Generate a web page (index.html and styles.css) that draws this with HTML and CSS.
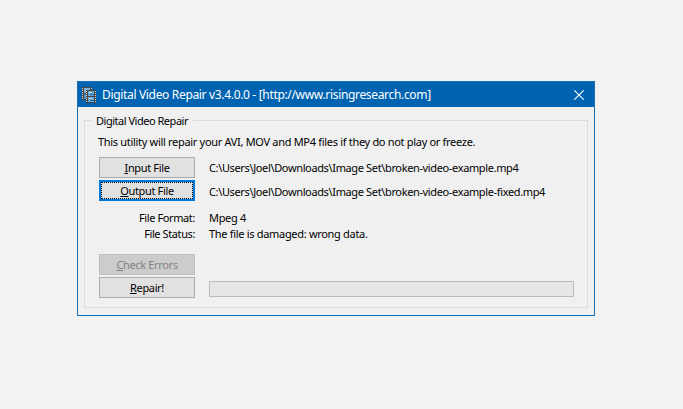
FILE: index.html
```html
<!DOCTYPE html>
<html lang="en">
<head>
    <meta charset="UTF-8">
    <meta name="viewport" content="width=device-width, initial-scale=1.0">
    <title>Digital Video Repair</title>
    <link rel="stylesheet" href="styles.css">
</head>
<body>
    <div class="window">
        <div class="titlebar">
            <svg class="app-icon" width="14" height="16" viewBox="0 0 14 16" shape-rendering="crispEdges">
                <rect x="0" y="0" width="10" height="13" fill="#4a4542"/>
                <rect x="2" y="1" width="6" height="5" fill="#7fb5dc"/>
                <rect x="2" y="7" width="6" height="5" fill="#4f91c5"/>
                <path d="M.5 1v12M9.500 1v2" stroke="#d9d5cf" stroke-dasharray="1 1"/>
                <rect x="4" y="3" width="10" height="13" fill="#4a4542"/>
                <rect x="6" y="4" width="6" height="5" fill="#65a9d8"/>
                <rect x="6" y="10" width="6" height="5" fill="#65a9d8"/>
                <path d="M7 5h3v1H7zM7 11h3v1H7z" fill="#b9dcf2"/>
                <path d="M8 7h4v1H8zM8 13h4v1H8z" fill="#2d6d9d"/>
                <path d="M4.500 4v12M13.500 4v12" stroke="#d9d5cf" stroke-dasharray="1 1"/>
            </svg>
            <span class="title">Digital Video Repair v3.4.0.0 - [http://www.risingresearch.com]</span>
            <svg class="close" width="10" height="10" viewBox="0 0 10 10">
                <path d="M.3 .3l9.400 9.400M9.700 .3L.3 9.700" stroke="#fff" stroke-width="1.100"/>
            </svg>
        </div>
        <div class="group">
            <div class="legend"><span>Digital Video Repair</span></div>
            <div class="intro"><span>This utility will repair your AVI, MOV and MP4 files if they do not play or freeze.</span></div>
            <div class="row">
                <button class="btn btn-input"><u>I</u>nput File</button>
                <span class="path">C:\Users\Joel\Downloads\Image Set\broken-video-example.mp4</span>
            </div>
            <div class="row">
                <button class="btn btn-focus"><u>O</u>utput File</button>
                <span class="path path-out">C:\Users\Joel\Downloads\Image Set\broken-video-example-fixed.mp4</span>
            </div>
            <div class="info">
                <span class="label">File Format:</span><span>Mpeg 4</span>
                <span class="label">File Status:</span><span>The file is damaged: wrong data.</span>
            </div>
            <div class="row">
                <button class="btn btn-check" disabled><u>C</u>heck Errors</button>
            </div>
            <div class="row">
                <button class="btn btn-repair"><u>R</u>epair!</button>
                <div class="progress"></div>
            </div>
        </div>
    </div>
</body>
</html>
```
FILE: styles.css
```css
* {
    box-sizing: border-box;
}
body {
    margin: 0;
    padding: 81px 0 0 77px;
    background: #f2f2f2;
    font-family: 'Noto Sans', 'Open Sans', sans-serif;
    font-size: 11px;
    line-height: 16px;
    letter-spacing: -0.31px;
    color: #000;
    white-space: nowrap;
}
.window {
    width: 518px;
    height: 235px;
    border: 1px solid #1670b5;
    background: #f0f0f0;
}
.titlebar {
    display: flex;
    align-items: center;
    height: 25px;
    padding: 0 10px 0 4px;
    background: #0063b1;
    color: #fff;
    font-size: 12px;
    letter-spacing: -0.33px;
}
.title {
    margin-left: 6px;
}
.close {
    margin-left: auto;
}
.group {
    width: 504px;
    height: 188px;
    margin: 13px 0 0 6px;
    padding: 0 13px 0 14px;
    border: 1px solid #dcdcdc;
}
.legend {
    width: 102px;
    margin: -8px 0 0 -8px;
    padding-left: 5px;
    background: #f0f0f0;
    letter-spacing: -0.48px;
}
.intro {
    height: 23px;
    margin: 5px 0 0 -1px;
}
.row {
    display: flex;
    align-items: center;
    gap: 14px;
    height: 21px;
    margin-bottom: 2px;
}
.btn {
    flex: none;
    width: 96px;
    height: 21px;
    padding: 0;
    border: 1px solid #adadad;
    background: #e1e1e1;
    font: inherit;
    line-height: 19px;
    letter-spacing: -0.35px;
    color: #000;
}
.btn-focus {
    border: 2px solid #0078d7;
    line-height: 15px;
    outline: 1px dotted #000;
    outline-offset: -3px;
}
.btn:disabled {
    border-color: #bfbfbf;
    background: #ccc;
    color: #838383;
}
.path {
    letter-spacing: -0.36px;
}
.path-out {
    padding-top: 2px;
}
.info {
    display: grid;
    grid-template-columns: 96px auto;
    column-gap: 14px;
    height: 51px;
    padding-top: 7px;
    align-content: start;
}
.label {
    text-align: right;
    letter-spacing: -0.4px;
}
.progress {
    width: 365px;
    height: 16px;
    margin-top: 3px;
    border: 1px solid #bcbcbc;
    background: #e6e6e6;
}
```
